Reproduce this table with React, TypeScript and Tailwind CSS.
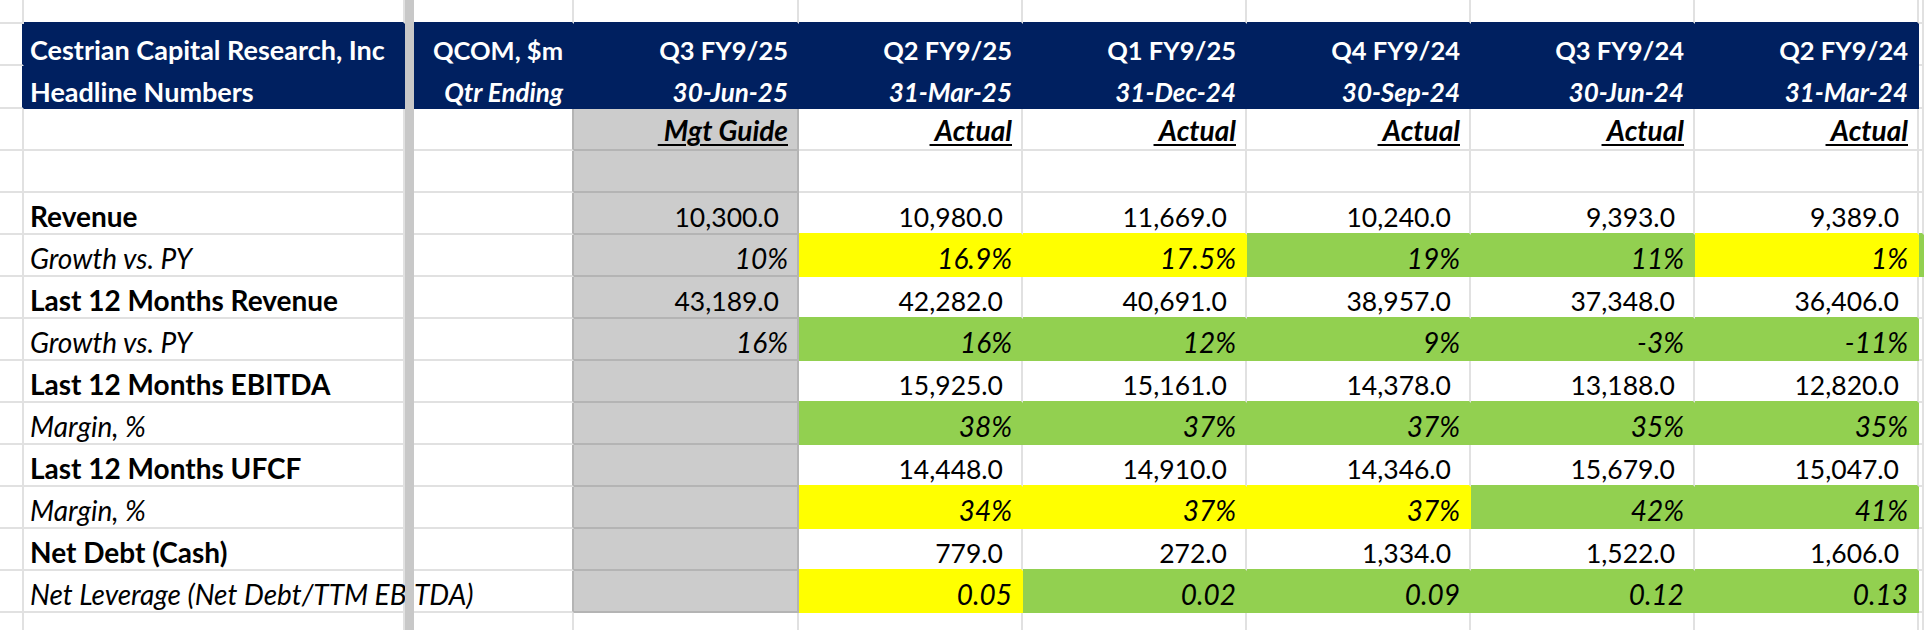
type Fill = 'w' | 'y' | 'g' | 's' | 'n'
type Look = 'hl' | 'hl2' | 'hb' | 'hbi' | 'u' | 'lb' | 'li' | 'n' | 'p'
type Cell = { f: Fill; t?: string; k?: Look }

const bgOf: Record<Fill, string> = {
  w: '',
  y: 'bg-[#ffff00]',
  g: 'bg-[#92d050]',
  s: 'bg-[#cccccc]',
  n: 'bg-[#002060]',
}

const bottomOf: Record<string, string> = {
  grid: 'border-b-[#e1e1e1]',
  y: 'border-b-[#ffff00]',
  g: 'border-b-[#92d050]',
  s: 'border-b-[#b4b4b4]',
  n: 'border-b-[#002060]',
}

const rightOf: Record<string, string> = {
  grid: 'border-r-[#e1e1e1]',
  y: 'border-r-[#ffff00]',
  g: 'border-r-[#92d050]',
  s: 'border-r-[#b4b4b4]',
  n: 'border-r-[#002060]',
}

const lookOf: Record<Look, string> = {
  hl: 'justify-start pl-[6px] pb-[1px] text-[27px] font-bold text-white',
  hl2: 'justify-start pl-[6px] pb-[2px] text-[27px] font-bold text-white',
  hb: 'justify-end pr-[9px] pb-[1px] text-[25.5px] font-bold text-white',
  hbi: 'justify-end pr-[9px] pb-[2px] text-[26px] font-bold italic text-white',
  u: 'justify-end pr-[9px] pb-[5px] text-[28px] font-bold italic text-black',
  lb: 'justify-start pl-[6px] pb-[3px] text-[28px] font-bold text-black',
  li: 'justify-start pl-[6px] pb-[3px] text-[28px] italic text-black',
  n: 'justify-end pr-[18px] pb-[3px] text-[26.5px] text-black',
  p: 'justify-end pr-[9px] pb-[3px] text-[28px] italic text-black',
}

// A, B, C, D, E..I, J  (frozen pane line sits between B and C)
const widths = [
  'w-[24px]',
  'w-[381px] border-r-0',
  'w-[160px]',
  'w-[225px]',
  'w-[224px]',
  'w-[224px]',
  'w-[224px]',
  'w-[224px]',
  'w-[224px]',
  'flex-1 border-r-0',
]

const w: Cell = { f: 'w' }
const blank = (n: number): Cell[] => Array.from({ length: n }, () => ({ f: 'w' as Fill }))

const num = (f: Fill, t: string): Cell => ({ f, t, k: 'n' })
const pct = (f: Fill, t: string): Cell => ({ f, t, k: 'p' })

const rows: { h: string; cells: Cell[] }[] = [
  { h: 'h-[24px]', cells: blank(10) },
  {
    h: 'h-[42px]',
    cells: [
      w,
      { f: 'n', t: 'Cestrian Capital Research, Inc', k: 'hl' },
      { f: 'n', t: 'QCOM, $m', k: 'hb' },
      { f: 'n', t: 'Q3 FY9/25', k: 'hb' },
      { f: 'n', t: 'Q2 FY9/25', k: 'hb' },
      { f: 'n', t: 'Q1 FY9/25', k: 'hb' },
      { f: 'n', t: 'Q4 FY9/24', k: 'hb' },
      { f: 'n', t: 'Q3 FY9/24', k: 'hb' },
      { f: 'n', t: 'Q2 FY9/24', k: 'hb' },
      w,
    ],
  },
  {
    h: 'h-[43px]',
    cells: [
      w,
      { f: 'n', t: 'Headline Numbers', k: 'hl2' },
      { f: 'n', t: 'Qtr Ending', k: 'hbi' },
      { f: 'n', t: '30-Jun-25', k: 'hbi' },
      { f: 'n', t: '31-Mar-25', k: 'hbi' },
      { f: 'n', t: '31-Dec-24', k: 'hbi' },
      { f: 'n', t: '30-Sep-24', k: 'hbi' },
      { f: 'n', t: '30-Jun-24', k: 'hbi' },
      { f: 'n', t: '31-Mar-24', k: 'hbi' },
      w,
    ],
  },
  {
    h: 'h-[42px]',
    cells: [
      w,
      w,
      w,
      { f: 's', t: 'Mgt Guide', k: 'u' },
      { f: 'w', t: 'Actual', k: 'u' },
      { f: 'w', t: 'Actual', k: 'u' },
      { f: 'w', t: 'Actual', k: 'u' },
      { f: 'w', t: 'Actual', k: 'u' },
      { f: 'w', t: 'Actual', k: 'u' },
      w,
    ],
  },
  { h: 'h-[42px]', cells: [w, w, w, { f: 's' }, w, w, w, w, w, w] },
  {
    h: 'h-[42px]',
    cells: [
      w,
      { f: 'w', t: 'Revenue', k: 'lb' },
      w,
      num('s', '10,300.0'),
      num('w', '10,980.0'),
      num('w', '11,669.0'),
      num('w', '10,240.0'),
      num('w', '9,393.0'),
      num('w', '9,389.0'),
      w,
    ],
  },
  {
    h: 'h-[42px]',
    cells: [
      w,
      { f: 'w', t: 'Growth vs. PY', k: 'li' },
      w,
      pct('s', '10%'),
      pct('y', '16.9%'),
      pct('y', '17.5%'),
      pct('g', '19%'),
      pct('g', '11%'),
      pct('y', '1%'),
      { f: 'g' },
    ],
  },
  {
    h: 'h-[42px]',
    cells: [
      w,
      { f: 'w', t: 'Last 12 Months Revenue', k: 'lb' },
      w,
      num('s', '43,189.0'),
      num('w', '42,282.0'),
      num('w', '40,691.0'),
      num('w', '38,957.0'),
      num('w', '37,348.0'),
      num('w', '36,406.0'),
      w,
    ],
  },
  {
    h: 'h-[42px]',
    cells: [
      w,
      { f: 'w', t: 'Growth vs. PY', k: 'li' },
      w,
      pct('s', '16%'),
      pct('g', '16%'),
      pct('g', '12%'),
      pct('g', '9%'),
      pct('g', '-3%'),
      pct('g', '-11%'),
      w,
    ],
  },
  {
    h: 'h-[42px]',
    cells: [
      w,
      { f: 'w', t: 'Last 12 Months EBITDA', k: 'lb' },
      w,
      { f: 's' },
      num('w', '15,925.0'),
      num('w', '15,161.0'),
      num('w', '14,378.0'),
      num('w', '13,188.0'),
      num('w', '12,820.0'),
      w,
    ],
  },
  {
    h: 'h-[42px]',
    cells: [
      w,
      { f: 'w', t: 'Margin, %', k: 'li' },
      w,
      { f: 's' },
      pct('g', '38%'),
      pct('g', '37%'),
      pct('g', '37%'),
      pct('g', '35%'),
      pct('g', '35%'),
      w,
    ],
  },
  {
    h: 'h-[42px]',
    cells: [
      w,
      { f: 'w', t: 'Last 12 Months UFCF', k: 'lb' },
      w,
      { f: 's' },
      num('w', '14,448.0'),
      num('w', '14,910.0'),
      num('w', '14,346.0'),
      num('w', '15,679.0'),
      num('w', '15,047.0'),
      w,
    ],
  },
  {
    h: 'h-[42px]',
    cells: [
      w,
      { f: 'w', t: 'Margin, %', k: 'li' },
      w,
      { f: 's' },
      pct('y', '34%'),
      pct('y', '37%'),
      pct('y', '37%'),
      pct('g', '42%'),
      pct('g', '41%'),
      w,
    ],
  },
  {
    h: 'h-[42px]',
    cells: [
      w,
      { f: 'w', t: 'Net Debt (Cash)', k: 'lb' },
      w,
      { f: 's' },
      num('w', '779.0'),
      num('w', '272.0'),
      num('w', '1,334.0'),
      num('w', '1,522.0'),
      num('w', '1,606.0'),
      w,
    ],
  },
  {
    h: 'h-[42px]',
    cells: [
      w,
      { f: 'w', t: 'Net Leverage (Net Debt/TTM EBITDA)', k: 'li' },
      w,
      { f: 's' },
      pct('y', '0.05'),
      pct('g', '0.02'),
      pct('g', '0.09'),
      pct('g', '0.12'),
      pct('g', '0.13'),
      w,
    ],
  },
  { h: 'h-[42px]', cells: blank(10) },
]

// Excel hides a gridline when the cell on either side is filled
function edge(cell: Fill, next?: Fill) {
  if (cell === 's') return 's'
  if (cell !== 'w') return cell
  if (next && next !== 'w') return next
  return 'grid'
}

export default function App() {
  return (
    <div className="w-[1924px] h-[630px] overflow-hidden bg-white flex flex-col font-['Lato',sans-serif] text-[26px]">
      {rows.map((row, r) => (
        <div key={r} className={`flex shrink-0 ${row.h}`}>
          {row.cells.map((cell, c) => {
            const below = rows[r + 1]?.cells[c]?.f
            const right = row.cells[c + 1]?.f
            const cls = [
              'shrink-0 flex items-end leading-none whitespace-nowrap border-b-2 border-r-2',
              widths[c],
              bgOf[cell.f],
              bottomOf[edge(cell.f, below)],
              rightOf[edge(cell.f, right)],
              cell.k ? lookOf[cell.k] : '',
            ].join(' ')
            return (
              <div key={c} className="contents">
                <div className={cls}>
                  {cell.k === 'u' ? (
                    <span className="underline decoration-2 underline-offset-[3px]">{'\u00a0' + cell.t}</span>
                  ) : (
                    cell.t
                  )}
                </div>
                {c === 1 && <div className="w-[9px] shrink-0 bg-[#c8c8c8]" />}
              </div>
            )
          })}
        </div>
      ))}
    </div>
  )
}
